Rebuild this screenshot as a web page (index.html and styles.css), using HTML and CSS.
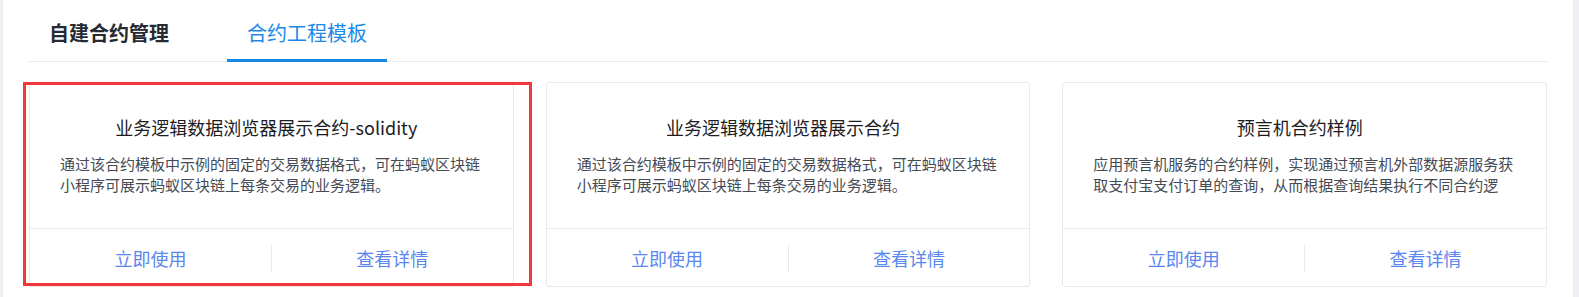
FILE: index.html
```html
<!DOCTYPE html>
<html lang="zh-CN">
<head>
<meta charset="utf-8">
<title>合约工程模板</title>
<link rel="stylesheet" href="styles.css">
</head>
<body>
<div class="panel">
  <div class="tabs">
    <div class="tab tab-strong">自建合约管理</div>
    <div class="tab tab-active">合约工程模板</div>
  </div>
  <div class="cards">
    <div class="card">
      <div class="card-body">
        <div class="card-title">业务逻辑数据浏览器展示合约-solidity</div>
        <div class="card-desc">通过该合约模板中示例的固定的交易数据格式，可在蚂蚁区块链小程序可展示蚂蚁区块链上每条交易的业务逻辑。</div>
      </div>
      <div class="card-foot">
        <a class="act">立即使用</a>
        <span class="sep"></span>
        <a class="act">查看详情</a>
      </div>
    </div>
    <div class="card">
      <div class="card-body">
        <div class="card-title">业务逻辑数据浏览器展示合约</div>
        <div class="card-desc">通过该合约模板中示例的固定的交易数据格式，可在蚂蚁区块链小程序可展示蚂蚁区块链上每条交易的业务逻辑。</div>
      </div>
      <div class="card-foot">
        <a class="act">立即使用</a>
        <span class="sep"></span>
        <a class="act">查看详情</a>
      </div>
    </div>
    <div class="card">
      <div class="card-body">
        <div class="card-title">预言机合约样例</div>
        <div class="card-desc">应用预言机服务的合约样例，实现通过预言机外部数据源服务获取支付宝支付订单的查询，从而根据查询结果执行不同合约逻辑，完成链上业务处理。</div>
      </div>
      <div class="card-foot">
        <a class="act">立即使用</a>
        <span class="sep"></span>
        <a class="act">查看详情</a>
      </div>
    </div>
  </div>
  <div class="highlight"></div>
</div>
</body>
</html>
```

FILE: styles.css
```css
html, body {
  margin: 0;
  padding: 0;
}
body {
  background: #eef0f5;
  font-family: "Noto Sans CJK SC", "Noto Sans", sans-serif;
  height: 297px;
  overflow: hidden;
}
.panel {
  position: relative;
  margin-left: 3px;
  width: 1570px;
  height: 297px;
  box-sizing: border-box;
  padding: 0 26px;
  background: #ffffff;
}
.tabs {
  display: flex;
  gap: 38px;
  border-bottom: 1px solid #e9e9ec;
}
.tab {
  padding: 19px 20px 12px;
  line-height: 28px;
  font-size: 20px;
  margin-bottom: -1px;
  border-bottom: 3px solid transparent;
  white-space: nowrap;
}
.tab-strong {
  color: #262a33;
  font-weight: 700;
}
.tab-active {
  color: #1c88e8;
  border-bottom-color: #1588e6;
}
.cards {
  display: grid;
  grid-template-columns: repeat(3, 1fr);
  gap: 32px;
  margin-top: 20px;
}
.card {
  border: 1px solid #e8e8eb;
  border-radius: 3px;
  background: #fff;
}
.card-body {
  padding: 31px 30px 33px;
}
.card-title {
  font-size: 18px;
  line-height: 26px;
  color: #1d1d1f;
  text-align: center;
  padding-right: 10px;
  margin-bottom: 13px;
  white-space: nowrap;
}
.card-desc {
  font-size: 15px;
  line-height: 21px;
  color: #454a55;
  height: 42px;
  overflow: hidden;
}
.card-foot {
  display: flex;
  align-items: center;
  height: 57px;
  border-top: 1px solid #ebebee;
}
.act {
  flex: 1;
  text-align: center;
  font-size: 18px;
  line-height: 26px;
  color: #5a86f0;
  cursor: pointer;
}
.sep {
  width: 1px;
  height: 28px;
  background: #ebebee;
}
.highlight {
  position: absolute;
  left: 20px;
  top: 82px;
  width: 503px;
  height: 198px;
  border: 3px solid #f2383a;
  pointer-events: none;
}
```
